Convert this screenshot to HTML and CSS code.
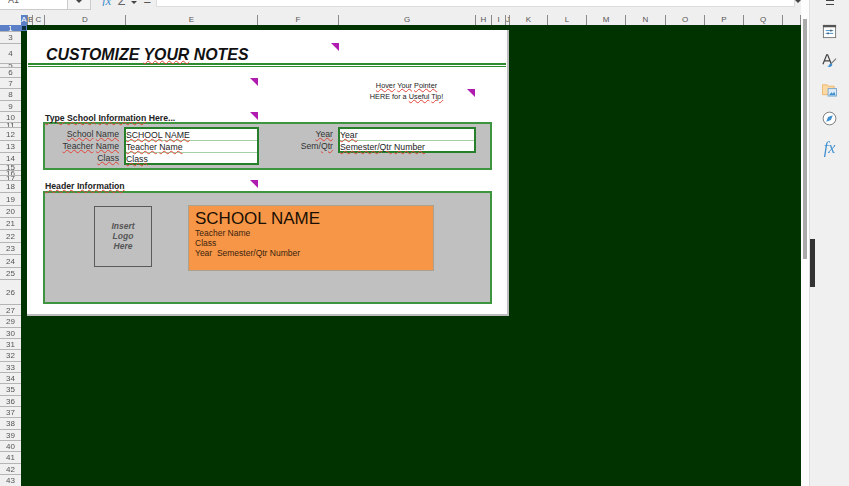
FILE: index.html
```html
<!DOCTYPE html>
<html lang="en">
<head>
    <meta charset="UTF-8">
    <title>Customize Your Notes</title>
    <link rel="stylesheet" href="styles.css">
</head>
<body>
    <div class="app">
        <div class="main">
            <!-- Formula bar, cut off at the top of the window -->
            <div class="formula-bar">
                <div class="name-box">A1</div>
                <div class="name-drop"><span class="caret"></span></div>
                <div class="fx-tools">
                    <span class="fx-btn">fx</span>
                    <span class="sum-btn">Σ</span>
                    <span class="caret small"></span>
                    <span class="eq-btn">=</span>
                </div>
                <div class="formula-input"></div>
                <div class="formula-drop"><span class="caret small"></span></div>
            </div>

            <!-- Column letters -->
            <div class="col-head">
                <div class="corner"></div>
                <div class="cols">
                    <div class="sel">A</div><div>B</div><div>C</div><div>D</div><div>E</div><div>F</div><div>G</div><div>H</div><div>I</div><div>J</div><div>K</div><div>L</div><div>M</div><div>N</div><div>O</div><div>P</div><div>Q</div><div></div>
                </div>
            </div>

            <div class="grid-wrap">
                <div class="rows">
                    <div class="sel">1</div><div>3</div><div>4</div><div>5</div><div>6</div><div>7</div><div>8</div><div>9</div><div>10</div><div>11</div><div>12</div><div>13</div><div>14</div><div>15</div><div>16</div><div>17</div><div>18</div><div>19</div><div>20</div><div>21</div><div>22</div><div>23</div><div>24</div><div>25</div><div>26</div><div>27</div><div>29</div><div>30</div><div>31</div><div>32</div><div>33</div><div>34</div><div>35</div><div>36</div><div>37</div><div>38</div><div>39</div><div>40</div><div>41</div><div>42</div><div>43</div>
                </div>

                <div class="sheet">
                    <span class="cell-cursor"></span>

                    <div class="paper">
                        <h1 class="title">CUSTOMIZE <span class="sq">YOUR</span> NOTES</h1>
                        <div class="rule"></div>

                        <div class="tip">
                            <p><span class="sq">Hover</span> <span class="sq">Your</span> <span class="sq">Pointer</span></p>
                            <p>HERE for a <span class="sq">Useful</span> <span class="sq">Tip!</span></p>
                        </div>

                        <h2 class="label-head first"><span class="sq">Type</span> <span class="sq">School</span> <span class="sq">Information</span> Here...</h2>
                        <div class="panel info-panel">
                            <div class="field-labels left-labels">
                                <div><span class="sq">School</span> <span class="sq">Name</span></div>
                                <div><span class="sq">Teacher</span> <span class="sq">Name</span></div>
                                <div><span class="sq">Class</span></div>
                            </div>
                            <div class="fields left-fields">
                                <div><span class="sq">SCHOOL</span> <span class="sq">NAME</span></div>
                                <div><span class="sq">Teacher</span> <span class="sq">Name</span></div>
                                <div><span class="sq">Class</span></div>
                            </div>
                            <div class="field-labels right-labels">
                                <div><span class="sq">Year</span></div>
                                <div>Sem/<span class="sq">Qtr</span></div>
                            </div>
                            <div class="fields right-fields">
                                <div><span class="sq">Year</span></div>
                                <div><span class="sq">Semester/Qtr</span> <span class="sq">Number</span></div>
                            </div>
                        </div>

                        <h2 class="label-head second"><span class="sq">Header</span> <span class="sq">Information</span></h2>
                        <div class="panel header-panel">
                            <div class="logo-box">Insert<br>Logo<br>Here</div>
                            <div class="preview">
                                <div class="preview-name">SCHOOL NAME</div>
                                <div>Teacher Name</div>
                                <div>Class</div>
                                <div>Year&nbsp; Semester/Qtr Number</div>
                            </div>
                        </div>

                        <!-- Comment markers sit on top of the sheet -->
                        <span class="marker m1"></span>
                        <span class="marker m2"></span>
                        <span class="marker m3"></span>
                        <span class="marker m4"></span>
                        <span class="marker m5"></span>
                    </div>
                </div>
            </div>
        </div>

        <div class="vscroll"><div class="thumb"></div></div>

        <div class="sidebar">
            <span class="sidebar-handle"></span>
            <div class="menu-icon"></div>
            <svg class="side-icon" viewBox="0 0 16 16">
                <rect x="1.5" y="1.5" width="13" height="13" fill="#fff" stroke="#777"/>
                <rect x="1" y="1" width="14" height="2.5" fill="#555"/>
                <path d="M4 7h8M4 10h8" stroke="#3f8fd0"/>
                <path d="M9.5 6v2M6.5 9v2" stroke="#333"/>
            </svg>
            <svg class="side-icon" viewBox="0 0 16 16">
                <path d="M1 12 5 2h1l4 10M2.8 8.500h5.500" fill="none" stroke="#444" stroke-width="1.300"/>
                <path d="M15 6 9.500 11.500" stroke="#777" stroke-width="1.200"/>
                <path d="M9.500 11c-2 .5-1.500 3-4 3.500 3 1 5.500 0 5.500-2.300z" fill="#3f8fd0"/>
            </svg>
            <svg class="side-icon" viewBox="0 0 16 16">
                <path d="M.5 3h5l1 1.500h6.500v9H.5z" fill="#fbd9a6" stroke="#eeb56a"/>
                <rect x="6.500" y="7" width="9" height="8" fill="#dcebf7" stroke="#7aa7cc"/>
                <path d="M7.500 14l2.500-3 1.500 1.500 1.500-2 1.500 3.500z" fill="#3f8fd0"/>
            </svg>
            <svg class="side-icon" viewBox="0 0 16 16">
                <circle cx="8" cy="8" r="6.800" fill="#fff" stroke="#777"/>
                <path d="M11.500 4.500 9.500 9.500 4.500 11.500 6.500 6.500z" fill="#3f8fd0"/>
            </svg>
            <div class="side-fx">fx</div>
        </div>
    </div>
</body>
</html>
```

FILE: styles.css
```css
* {
    box-sizing: border-box;
}

html, body {
    margin: 0;
    padding: 0;
    height: 100%;
    overflow: hidden;
}

body {
    font-family: "Liberation Sans", Arial, sans-serif;
    color: #222;
    background-color: #f0f0f0;
}

/* The reference is a soft video frame */
.app {
    display: flex;
    width: 849px;
    height: 486px;
    filter: blur(0.35px);
}

.main {
    width: 801px;
    display: flex;
    flex-direction: column;
}

/* Formula bar */
.formula-bar {
    height: 15px;
    display: flex;
    align-items: flex-start;
    background-color: #efefef;
}

.name-box {
    width: 68px;
    height: 10px;
    padding-left: 8px;
    background-color: #fff;
    border-bottom: 1px solid #ccc;
    border-right: 1px solid #ccc;
    font-size: 9px;
    line-height: 0;
    color: #555;
    overflow: hidden;
}

.name-drop {
    width: 23px;
    height: 10px;
    background-color: #f4f4f4;
    border-bottom: 1px solid #ccc;
    border-right: 1px solid #ccc;
    text-align: center;
}

.caret {
    display: inline-block;
    border-left: 3px solid transparent;
    border-right: 3px solid transparent;
    border-top: 3px solid #444;
    vertical-align: top;
}

.fx-tools {
    width: 65px;
    height: 6px;
    display: flex;
    align-items: flex-end;
    gap: 6px;
    padding-left: 11px;
    overflow: hidden;
}

.fx-tools .caret {
    margin-bottom: 2px;
}

.fx-btn {
    font-family: "Liberation Serif", serif;
    font-style: italic;
    font-size: 13px;
    line-height: 10px;
    color: #3f8fd0;
}

.sum-btn {
    font-size: 13px;
    line-height: 10px;
    color: #666;
}

.eq-btn {
    font-size: 13px;
    line-height: 10px;
    color: #555;
}

.formula-input {
    width: 639px;
    height: 7px;
    background-color: #fff;
    border: 1px solid #ddd;
    border-top: 0;
}

.formula-drop {
    flex: 1;
    text-align: center;
}

/* Column letters */
.col-head {
    height: 10px;
    display: flex;
    background-color: #efefef;
}

.corner {
    width: 21px;
}

.cols {
    flex: 1;
    display: grid;
    grid-template-columns: 7px 5px 12px 81px 132px 81px 137px 16px 14px 4px 38px 39px 39px 40px 39px 39px 39px 18px;
    font-size: 8px;
    line-height: 10px;
    text-align: center;
    color: #555;
}

.cols div {
    border-right: 1px solid #8a8a8a;
    overflow: hidden;
}

.cols .sel {
    background-color: #5b80c8;
    color: #fff;
}

.grid-wrap {
    flex: 1;
    display: flex;
    min-height: 0;
}

/* Row numbers, with the heights of the rows in the sheet */
.rows {
    width: 21px;
    display: grid;
    grid-template-rows: 7px 12px 20px 4px 10px 11px 12px 11px 11px 5px 13px 12px 12px 6px 5px 5px 12px 13px 12px 12px 13px 12px 13px 12px 25px 11px 12px 11px 11px 12px 11px 11px 12px 11px 11px 12px 11px 11px 12px 11px 12px;
    font-size: 8px;
    text-align: center;
    color: #555;
    background-color: #f0f0f0;
}

.rows div {
    display: flex;
    align-items: center;
    justify-content: center;
    border-bottom: 1px solid #b5b5b5;
    overflow: hidden;
    height: 100%;
}

.rows .sel {
    background-color: #5b80c8;
    color: #fff;
}

/* Sheet */
.sheet {
    flex: 1;
    position: relative;
    padding: 5px 0 0 6px;
    background-color: #003300;
}

.cell-cursor {
    position: absolute;
    left: 0;
    top: 0;
    width: 6px;
    height: 6px;
    background-color: #0b2f3f;
    border: 1px solid #5b80c8;
}

.paper {
    position: relative;
    width: 482px;
    height: 286px;
    background-color: #fff;
    border-right: 2px solid #bdbdbd;
    border-bottom: 2px solid #bdbdbd;
}

.sq {
    text-decoration: underline wavy #e0453a 0.6px;
    text-underline-offset: 0;
}

.title {
    margin: 0;
    height: 33px;
    padding: 15px 0 0 19px;
    font-size: 15.900px;
    line-height: 20px;
    font-style: italic;
    font-weight: bold;
    color: #111;
}

.rule {
    height: 4px;
    margin: 0 1px;
    border-top: 2px solid #2e8b2e;
    border-bottom: 1px solid #2e8b2e;
}

.tip {
    height: 45px;
    padding: 13px 0 0 311px;
    width: 448px;
    font-size: 7.300px;
    line-height: 11px;
    text-align: center;
    color: #222;
}

.tip p {
    margin: 0;
}

.label-head {
    margin: 0 0 0 18px;
    padding-top: 1px;
    font-size: 8.700px;
    line-height: 11px;
    font-weight: bold;
    color: #222;
}

.label-head.first {
    height: 10px;
}

.label-head.second {
    margin-top: 10px;
    height: 11px;
}

.panel {
    margin-left: 16px;
    width: 449px;
    background-color: #c0c0c0;
    border: 2px solid #3d963f;
}

/* School information inputs */
.info-panel {
    height: 48px;
    display: grid;
    grid-template-columns: 79px 135px 79px 138px;
    align-items: start;
    padding-top: 3px;
}

.field-labels {
    padding: 1px 5px 0 0;
    font-size: 8.700px;
    line-height: 12px;
    text-align: right;
    color: #333;
}

.fields {
    font-size: 8.700px;
    line-height: 11px;
    background-color: #fff;
    border: 2px solid #267f2b;
    color: #222;
}

.fields div {
    height: 12px;
    padding-top: 1px;
    border-bottom: 1px solid #a8d0a8;
}

.fields div:last-child {
    height: 10px;
    border-bottom: 0;
}

/* Header preview */
.header-panel {
    height: 113px;
    display: flex;
    align-items: flex-start;
    padding: 12px 0 0 49px;
}

.logo-box {
    width: 58px;
    height: 61px;
    margin-top: 1px;
    padding-top: 14px;
    border: 1px solid #5a5a5a;
    font-size: 8.500px;
    line-height: 10px;
    font-style: italic;
    font-weight: bold;
    text-align: center;
    color: #555;
}

.preview {
    width: 246px;
    height: 66px;
    margin-left: 36px;
    padding: 4px 0 0 6px;
    background-color: #f79646;
    border: 1px solid #a9a28f;
    font-size: 8.500px;
    line-height: 10px;
    color: #3a2410;
}

.preview-name {
    font-size: 17px;
    line-height: 18px;
    color: #1a0f05;
}

/* Comment markers */
.marker {
    position: absolute;
    width: 0;
    height: 0;
    border-top: 8px solid #b01cb0;
    border-left: 8px solid transparent;
}

.m1 { left: 304px; top: 13px; }
.m2 { left: 223px; top: 48px; }
.m3 { left: 440px; top: 59px; }
.m4 { left: 223px; top: 82px; }
.m5 { left: 223px; top: 150px; }

/* Scroll bar and right hand deck */
.vscroll {
    width: 8px;
    padding: 19px 2px 0;
    background-color: #fdfdfd;
}

.thumb {
    width: 4px;
    height: 240px;
    background-color: #aaa;
}

.sidebar {
    position: relative;
    width: 40px;
    display: flex;
    flex-direction: column;
    align-items: center;
    gap: 14px;
    background-color: #f0f0f0;
    border-left: 1px solid #ddd;
}

.sidebar-handle {
    position: absolute;
    left: 0;
    top: 239px;
    width: 5px;
    height: 48px;
    background-color: #333;
}

.menu-icon {
    width: 8px;
    height: 5px;
    margin-bottom: 5px;
    border-top: 1px solid #444;
    border-bottom: 1px solid #444;
}

.side-icon {
    width: 15px;
    height: 15px;
    flex: none;
}

.side-fx {
    font-family: "Liberation Serif", serif;
    font-style: italic;
    font-size: 16px;
    line-height: 16px;
    color: #3f8fd0;
}
```
